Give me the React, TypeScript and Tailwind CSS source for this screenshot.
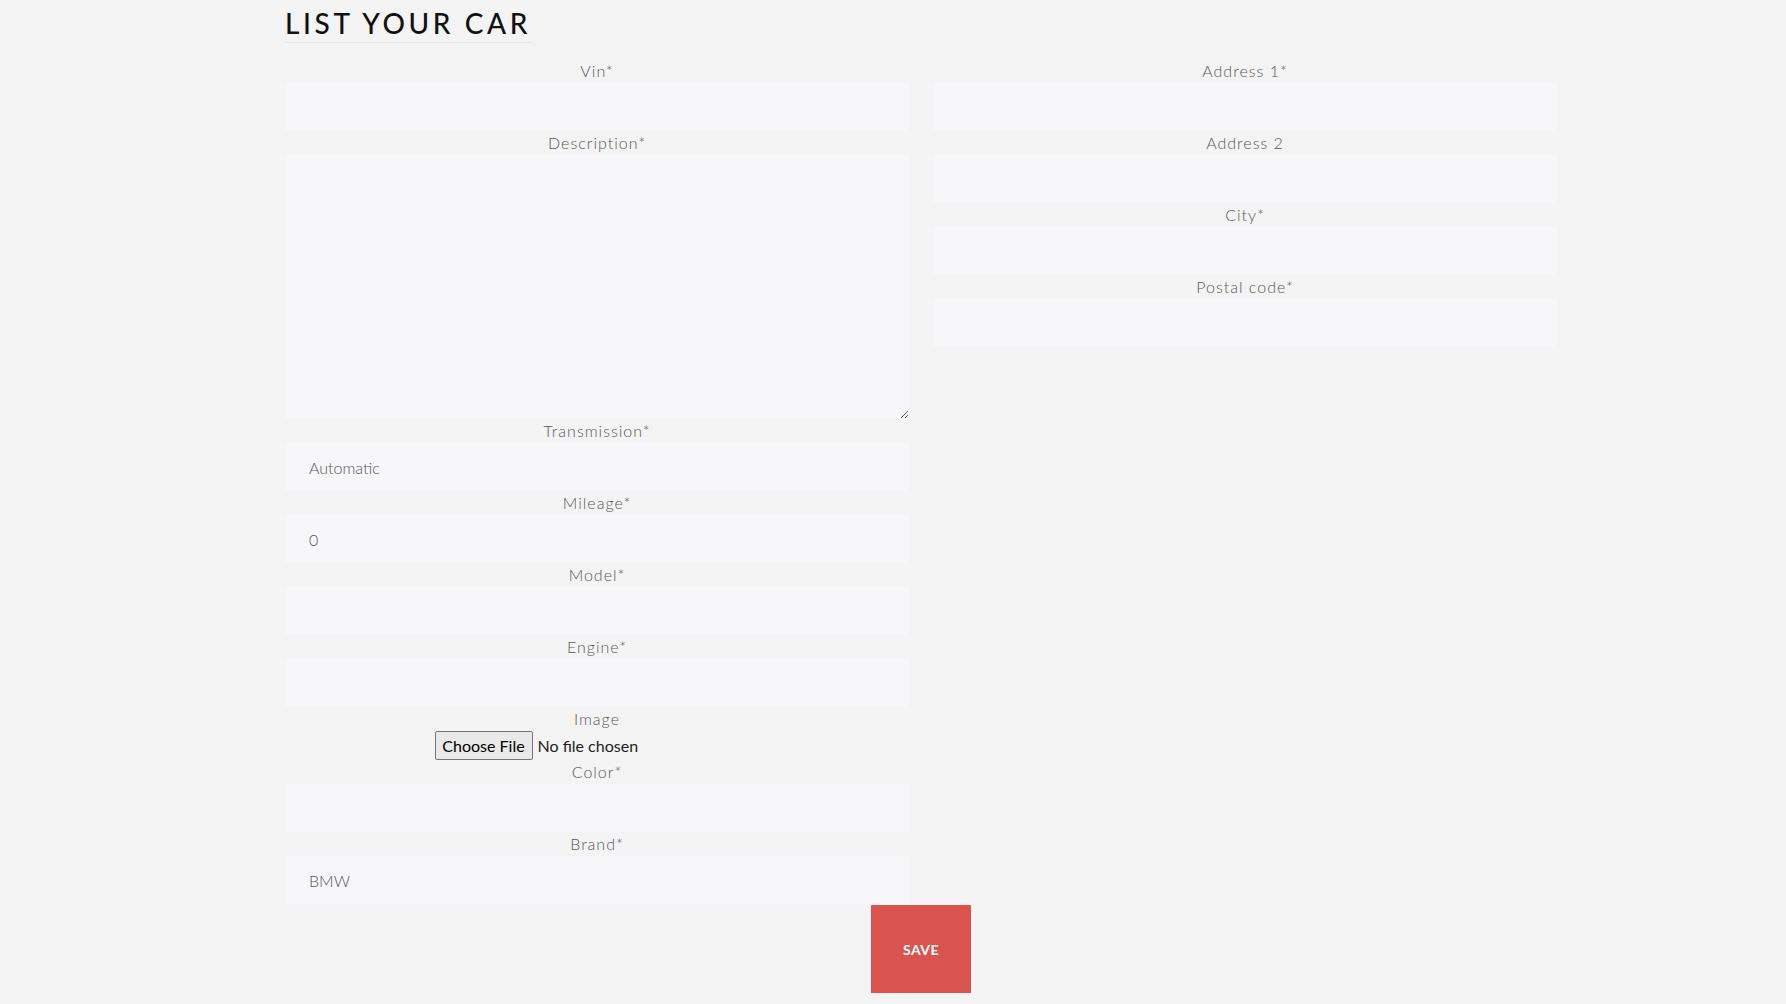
import React from "react";

const font = { fontFamily: "Lato, 'Open Sans', sans-serif" };

function Label({ children }: { children: React.ReactNode }) {
  return (
    <div className="h-6 leading-6 text-center text-[16px] tracking-[1px] text-[#575757] font-light">
      {children}
    </div>
  );
}

function Field({ label, value }: { label: string; value?: string }) {
  return (
    <div className="flex flex-col">
      <Label>{label}</Label>
      <input
        readOnly
        value={value ?? ""}
        className="h-12 w-full bg-[#f7f7f9] px-6 text-[16px] text-[#555] font-light outline-none border-0"
        style={font}
      />
    </div>
  );
}

export default function App() {
  return (
    <div className="min-h-[1004px] w-full bg-[#f4f4f4]" style={font}>
      <div className="ml-[285px] w-[1272px]">
        <div className="mb-[16px]">
          <h1 className="inline-block border-b border-[#e6e6e6] pt-[6px] pb-[2px] pr-[2px] text-[28px] leading-[34px] tracking-[3.6px] text-[#111] font-medium">
            LIST YOUR CAR
          </h1>
        </div>
        <div className="grid grid-cols-2 gap-x-6 items-start">
          <div className="flex flex-col">
            <Field label="Vin*" />
            <div className="flex flex-col">
              <Label>Description*</Label>
              <textarea
                readOnly
                className="block h-[264px] w-full bg-[#f7f7f9] px-6 py-3 outline-none border-0 resize-y"
                style={font}
              />
            </div>
            <Field label="Transmission*" value="Automatic" />
            <Field label="Mileage*" value="0" />
            <Field label="Model*" />
            <Field label="Engine*" />
            <div className="flex flex-col">
              <Label>Image</Label>
              <div className="flex justify-center">
                <div className="w-[325px] h-[29px] flex items-center">
                  <div className="h-[29px] w-[98px] flex items-center justify-center border border-[#767676] rounded-[2px] bg-[#e9e9e9] text-[16px] text-black">
                    Choose File
                  </div>
                  <span className="ml-[5px] text-[16px] text-[#222]">No file chosen</span>
                </div>
              </div>
            </div>
            <Field label="Color*" />
            <Field label="Brand*" value="BMW" />
          </div>
          <div className="flex flex-col">
            <Field label="Address 1*" />
            <Field label="Address 2" />
            <Field label="City*" />
            <Field label="Postal code*" />
          </div>
        </div>
        <div className="flex justify-center pt-px">
          <button className="h-[88px] w-[100px] bg-[#d9534f] text-white text-[14px] font-bold tracking-[0.5px]">
            SAVE
          </button>
        </div>
      </div>
    </div>
  );
}
